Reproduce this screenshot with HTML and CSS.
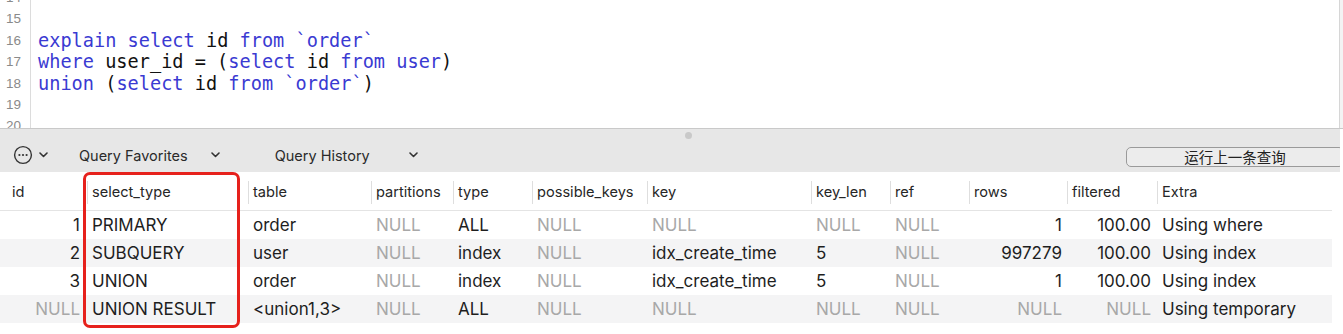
FILE: index.html
```html
<!DOCTYPE html>
<html lang="en">
<head>
    <meta charset="UTF-8">
    <title>Query Editor</title>
    <link rel="stylesheet" href="styles.css">
</head>
<body>
    <!-- SQL editor -->
    <div class="editor">
        <div class="gutter">
            <div class="lines">
                <div>14</div>
                <div>15</div>
                <div>16</div>
                <div>17</div>
                <div>18</div>
                <div>19</div>
                <div>20</div>
                <div>21</div>
            </div>
        </div>
        <div class="code">
            <div class="lines">
                <div>&nbsp;</div>
                <div>&nbsp;</div>
                <div><span class="kw">explain</span> <span class="kw">select</span> id <span class="kw">from</span> <span class="kw">`order`</span></div>
                <div><span class="kw">where</span> user_id = (<span class="kw">select</span> id <span class="kw">from</span> <span class="kw">user</span>)</div>
                <div><span class="kw">union</span> (<span class="kw">select</span> id <span class="kw">from</span> <span class="kw">`order`</span>)</div>
                <div>&nbsp;</div>
                <div>&nbsp;</div>
                <div>&nbsp;</div>
            </div>
        </div>
        <div class="vscroll"></div>
    </div>

    <!-- Toolbar -->
    <div class="toolbar">
        <span class="grip"></span>
        <svg class="more-icon" width="20" height="20" viewBox="0 0 20 20">
            <circle cx="10" cy="10" r="8.4" fill="none" stroke="#333" stroke-width="1.4"/>
            <circle cx="6.4" cy="10" r="1.1" fill="#333"/>
            <circle cx="10" cy="10" r="1.1" fill="#333"/>
            <circle cx="13.6" cy="10" r="1.1" fill="#333"/>
        </svg>
        <svg class="chev chev-more" width="9" height="6" viewBox="0 0 9 6">
            <path d="M1 1 L4.5 4.5 L8 1" fill="none" stroke="#333" stroke-width="1.6" stroke-linecap="round" stroke-linejoin="round"/>
        </svg>
        <span class="menu menu-fav">Query Favorites</span>
        <svg class="chev chev-fav" width="9" height="6" viewBox="0 0 9 6">
            <path d="M1 1 L4.5 4.5 L8 1" fill="none" stroke="#333" stroke-width="1.6" stroke-linecap="round" stroke-linejoin="round"/>
        </svg>
        <span class="menu menu-hist">Query History</span>
        <svg class="chev chev-hist" width="9" height="6" viewBox="0 0 9 6">
            <path d="M1 1 L4.5 4.5 L8 1" fill="none" stroke="#333" stroke-width="1.6" stroke-linecap="round" stroke-linejoin="round"/>
        </svg>
        <button class="run-btn">运行上一条查询</button>
    </div>

    <!-- Results -->
    <table class="results">
        <colgroup>
            <col style="width:87px">
            <col style="width:161px">
            <col style="width:123px">
            <col style="width:82px">
            <col style="width:79px">
            <col style="width:115px">
            <col style="width:164px">
            <col style="width:79px">
            <col style="width:79px">
            <col style="width:98px">
            <col style="width:90px">
            <col style="width:175px">
        </colgroup>
        <thead>
            <tr>
                <th class="first"><span>id</span></th>
                <th><span>select_type</span></th>
                <th><span>table</span></th>
                <th><span>partitions</span></th>
                <th><span>type</span></th>
                <th><span>possible_keys</span></th>
                <th><span>key</span></th>
                <th><span>key_len</span></th>
                <th><span>ref</span></th>
                <th><span>rows</span></th>
                <th><span>filtered</span></th>
                <th><span>Extra</span></th>
            </tr>
        </thead>
        <tbody>
            <tr>
                <td class="num num-id">1</td>
                <td>PRIMARY</td>
                <td>order</td>
                <td class="null">NULL</td>
                <td>ALL</td>
                <td class="null">NULL</td>
                <td class="null">NULL</td>
                <td class="null">NULL</td>
                <td class="null">NULL</td>
                <td class="num">1</td>
                <td class="num num-f">100.00</td>
                <td>Using where</td>
            </tr>
            <tr>
                <td class="num num-id">2</td>
                <td>SUBQUERY</td>
                <td>user</td>
                <td class="null">NULL</td>
                <td>index</td>
                <td class="null">NULL</td>
                <td>idx_create_time</td>
                <td>5</td>
                <td class="null">NULL</td>
                <td class="num">997279</td>
                <td class="num num-f">100.00</td>
                <td>Using index</td>
            </tr>
            <tr>
                <td class="num num-id">3</td>
                <td>UNION</td>
                <td>order</td>
                <td class="null">NULL</td>
                <td>index</td>
                <td class="null">NULL</td>
                <td>idx_create_time</td>
                <td>5</td>
                <td class="null">NULL</td>
                <td class="num">1</td>
                <td class="num num-f">100.00</td>
                <td>Using index</td>
            </tr>
            <tr>
                <td class="num num-id null">NULL</td>
                <td>UNION RESULT</td>
                <td>&lt;union1,3&gt;</td>
                <td class="null">NULL</td>
                <td>ALL</td>
                <td class="null">NULL</td>
                <td class="null">NULL</td>
                <td class="null">NULL</td>
                <td class="null">NULL</td>
                <td class="num null">NULL</td>
                <td class="num num-f null">NULL</td>
                <td>Using temporary</td>
            </tr>
        </tbody>
    </table>

    <!-- Red annotation around select_type -->
    <div class="highlight"></div>
</body>
</html>
```

FILE: styles.css
```css
body {
    margin: 0;
    background-color: #fff;
    font-family: Inter, "Liberation Sans", Arial, sans-serif;
    color: #1e1e1e;
    position: relative;
    width: 1343px;
    height: 334px;
    overflow: hidden;
}

/* Editor */
.editor {
    display: flex;
    height: 128px;
    overflow: hidden;
    border-bottom: 1px solid #c9c9c9;
}

.lines {
    margin-top: -13px;
}

.gutter {
    width: 21px;
    padding-right: 9px;
    border-right: 1px solid #dcdcdc;
    text-align: right;
    font-family: "Liberation Sans", Arial, sans-serif;
    font-size: 13.5px;
    color: #8a8a8a;
}

.gutter .lines div {
    height: 21.4px;
    line-height: 21.4px;
}

.code {
    flex: 1;
    padding-left: 7px;
    font-family: "DejaVu Sans Mono", monospace;
    font-size: 18.6px;
    color: #111;
}

.code .lines div {
    height: 21.4px;
    line-height: 21.4px;
    white-space: pre;
}

.kw {
    color: #3a3ad2;
}

.vscroll {
    width: 3px;
    background-color: #f3f3f3;
    border-left: 1px solid #d6d6d6;
}

/* Toolbar */
.toolbar {
    position: relative;
    display: flex;
    align-items: center;
    height: 43px;
    width: 1340px;
    padding-top: 9px;
    box-sizing: border-box;
    background-color: #e7e7e7;
    overflow: hidden;
    font-size: 14.5px;
    color: #2a2a2a;
}

.grip {
    position: absolute;
    left: 685px;
    top: 3px;
    width: 7px;
    height: 7px;
    border-radius: 50%;
    background-color: #c9c9c9;
}

.more-icon {
    margin-left: 13px;
}

.chev-more {
    margin-left: 6px;
}

.menu-fav {
    margin-left: 31px;
}

.chev-fav {
    margin-left: 23px;
}

.menu-hist {
    margin-left: 55px;
}

.chev-hist {
    margin-left: 39px;
}

.run-btn {
    margin-left: auto;
    margin-right: -4px;
    margin-top: 4px;
    width: 218px;
    height: 20px;
    padding: 0;
    border: 1px solid #9a9a9a;
    border-radius: 5px;
    background-color: #ececec;
    font-family: "Noto Sans CJK SC", sans-serif;
    font-size: 14.5px;
    line-height: 18px;
    color: #222;
}

/* Results table */
.results {
    width: 1332px;
    table-layout: fixed;
    border-collapse: collapse;
}

.results th {
    height: 36px;
    padding: 2px 0 0 0;
    text-align: left;
    font-weight: normal;
    font-size: 14.6px;
    color: #262626;
    border-bottom: 1px solid #e4e4e4;
}

.results th span {
    display: block;
    line-height: 23px;
    padding-left: 4px;
    border-left: 1px solid #dedede;
}

.results th.first span {
    border-left: none;
    padding-left: 12px;
}

.results td {
    height: 28px;
    padding: 0 5px;
    font-size: 17px;
    white-space: nowrap;
    overflow: hidden;
}

.results tbody tr:nth-child(even) {
    background-color: #f4f4f5;
}

.results td.num {
    text-align: right;
}

.results td.num-id {
    padding-right: 7px;
}

.results td.num-f {
    padding-right: 6px;
}

.results td.null {
    color: #a8a8a8;
}

.highlight {
    position: absolute;
    left: 83px;
    top: 172px;
    width: 157px;
    height: 156px;
    box-sizing: border-box;
    border: 3px solid #e6211c;
    border-radius: 7px;
}
```
